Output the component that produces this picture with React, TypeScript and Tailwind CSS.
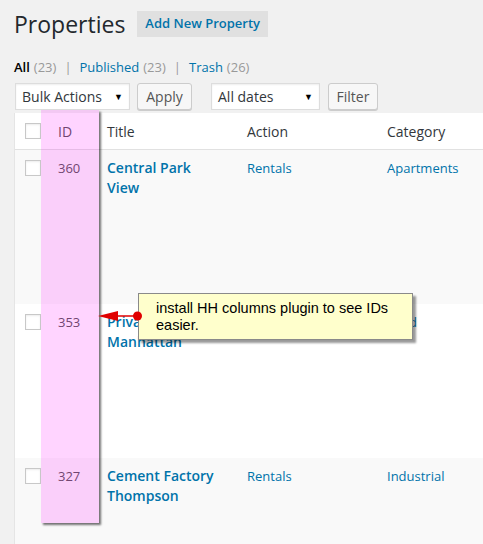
import React from 'react';

type Row = {
    id: number;
    title: string[];
    action: string;
    category: string;
    bg: string;
};

const rows: Row[] = [
    { id: 360, title: ['Central Park', 'View'], action: 'Rentals', category: 'Apartments', bg: 'bg-[#f9f9f9]' },
    { id: 353, title: ['Private Villa', 'Manhattan'], action: 'Sales', category: 'Land', bg: 'bg-white' },
    { id: 327, title: ['Cement Factory', 'Thompson'], action: 'Rentals', category: 'Industrial', bg: 'bg-[#f9f9f9]' },
];

const Checkbox: React.FC = () => (
    <span className="block h-[16px] w-[16px] border border-[#c8c8c8] bg-white shadow-[inset_0_1px_2px_rgba(0,0,0,0.08)]" />
);

const Select: React.FC<{ label: string; width: string }> = ({ label, width }) => (
    <div
        className={`flex h-[27px] ${width} items-center justify-between border border-[#dddddd] bg-white pl-[6px] pr-[6px] text-[14px] text-[#32373c] shadow-[inset_0_1px_2px_rgba(0,0,0,0.07)]`}
    >
        <span>{label}</span>
        <span className="text-[9px] text-black">▼</span>
    </div>
);

const Button: React.FC<{ label: string; width: string }> = ({ label, width }) => (
    <button
        className={`flex h-[27px] ${width} items-center justify-center rounded-[3px] border border-[#cccccc] bg-[#f7f7f7] text-[14px] text-[#555555] shadow-[0_1px_0_#cccccc]`}
    >
        {label}
    </button>
);

const App: React.FC = () => {
    return (
        <div
            className="relative h-[544px] w-[483px] overflow-hidden bg-[#f1f1f1]"
            style={{ fontFamily: '"Open Sans", sans-serif' }}
        >
            <div className="pl-[14px]">
                {/* heading */}
                <div className="flex h-[48px] items-center">
                    <h1 className="text-[23px] font-normal leading-[29px] text-[#23282d]">Properties</h1>
                    <button className="ml-[12px] flex h-[26px] items-center bg-[#e0e0e0] px-[8px] text-[13px] font-semibold text-[#0073aa]">
                        Add New Property
                    </button>
                </div>

                {/* views */}
                <div className="mt-[10px] flex h-[20px] items-center text-[13px] text-[#666666]">
                    <span className="font-semibold text-black">All</span>
                    <span className="ml-[4px] text-[#999999]">(23)</span>
                    <span className="mx-[8px] text-[#999999]">|</span>
                    <span className="text-[#0073aa]">Published</span>
                    <span className="ml-[4px] text-[#999999]">(23)</span>
                    <span className="mx-[8px] text-[#999999]">|</span>
                    <span className="text-[#0073aa]">Trash</span>
                    <span className="ml-[4px] text-[#999999]">(26)</span>
                </div>

                {/* tablenav */}
                <div className="mt-[5px] flex items-center pl-[1px]">
                    <Select label="Bulk Actions" width="w-[115px]" />
                    <div className="ml-[7px]">
                        <Button label="Apply" width="w-[55px]" />
                    </div>
                    <div className="ml-[19px]">
                        <Select label="All dates" width="w-[109px]" />
                    </div>
                    <div className="ml-[8px]">
                        <Button label="Filter" width="w-[50px]" />
                    </div>
                </div>

                {/* table */}
                <div className="mt-[3px] w-[520px] border-l border-[#e5e5e5]">
                    <div className="grid h-[37px] grid-cols-[26px_58px_140px_140px_1fr] items-center border-b border-[#e1e1e1] bg-white text-[14px] text-[#32373c]">
                        <div className="pl-[10px]">
                            <Checkbox />
                        </div>
                        <div className="pl-[17px] text-[#555555]">ID</div>
                        <div className="pl-[8px]">Title</div>
                        <div className="pl-[8px]">Action</div>
                        <div className="pl-[8px]">Category</div>
                    </div>

                    {rows.map((row) => (
                        <div
                            key={row.id}
                            className={`grid h-[154px] grid-cols-[26px_58px_140px_140px_1fr] items-start pt-[8px] ${row.bg}`}
                        >
                            <div className="pl-[10px] pt-[2px]">
                                <Checkbox />
                            </div>
                            <div className="pl-[17px] text-[13px] leading-[20px] text-[#555555]">{row.id}</div>
                            <div className="pl-[8px] text-[14px] font-semibold leading-[20px] text-[#0073aa]">
                                {row.title[0]}
                                <br />
                                {row.title[1]}
                            </div>
                            <div className="pl-[8px] text-[13px] leading-[20px] text-[#0073aa]">{row.action}</div>
                            <div className="pl-[8px] text-[13px] leading-[20px] text-[#0073aa]">{row.category}</div>
                        </div>
                    ))}
                </div>
            </div>

            {/* highlighted ID column annotation */}
            <div className="absolute left-[41px] top-[110px] h-[413px] w-[58px] bg-[rgba(255,0,255,0.17)] shadow-[2px_2px_2px_rgba(0,0,0,0.55)]" />

            {/* callout */}
            <div
                className="absolute left-[138px] top-[293px] h-[47px] w-[275px] border border-[#8a8a8a] bg-[#ffffcc] pl-[17px] pt-[6px] text-[14.5px] leading-[17px] text-black shadow-[3px_3px_2px_rgba(0,0,0,0.4)]"
                style={{ fontFamily: '"Liberation Sans", Arial, sans-serif' }}
            >
                install HH columns plugin to see IDs
                <br />
                easier.
            </div>
            <svg className="absolute left-[96px] top-[309px]" width="48" height="14" viewBox="0 0 48 14">
                <line x1="10" y1="7" x2="41" y2="7" stroke="#e00000" strokeWidth="1.5" />
                <polygon points="2,7 22,2 22,12" fill="#e00000" />
                <circle cx="41.5" cy="7" r="4.5" fill="#e00000" />
            </svg>
        </div>
    );
};

export default App;
